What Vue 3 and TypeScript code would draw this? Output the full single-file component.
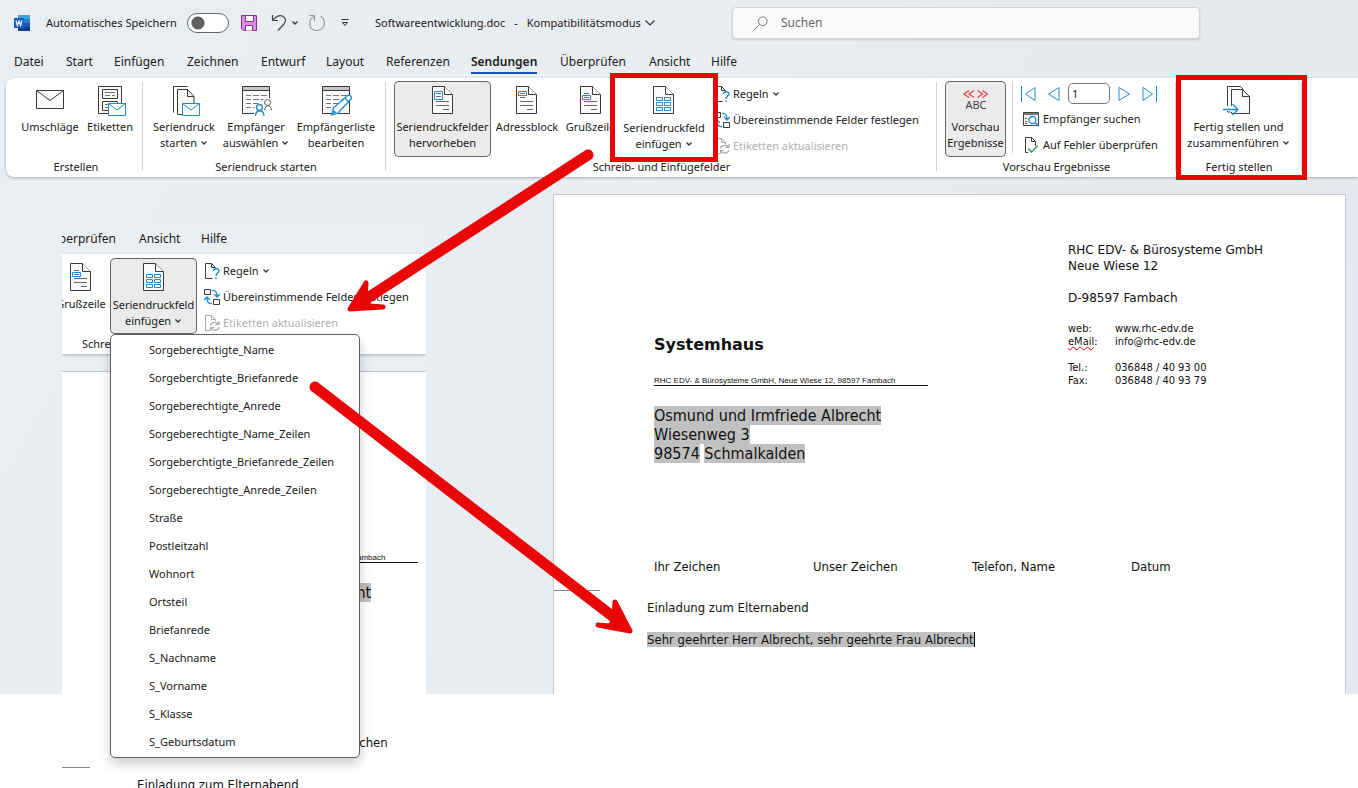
<script setup lang="ts">
import { ref } from 'vue'

interface Tab {
  name: string
  active?: boolean
}

const tabs: Tab[] = [
  { name: 'Datei' },
  { name: 'Start' },
  { name: 'Einfügen' },
  { name: 'Zeichnen' },
  { name: 'Entwurf' },
  { name: 'Layout' },
  { name: 'Referenzen' },
  { name: 'Sendungen', active: true },
  { name: 'Überprüfen' },
  { name: 'Ansicht' },
  { name: 'Hilfe' },
]

const mergeFields: string[] = [
  'Sorgeberechtigte_Name',
  'Sorgeberchtigte_Briefanrede',
  'Sorgeberechtigte_Anrede',
  'Sorgeberechtigte_Name_Zeilen',
  'Sorgeberchtigte_Briefanrede_Zeilen',
  'Sorgeberechtigte_Anrede_Zeilen',
  'Straße',
  'Postleitzahl',
  'Wohnort',
  'Ortsteil',
  'Briefanrede',
  'S_Nachname',
  'S_Vorname',
  'S_Klasse',
  'S_Geburtsdatum',
]

const autoSave = ref(false)
const search = ref('')
const record = ref('1')
</script>

<template>
  <div class="screen">
    <svg class="defs" aria-hidden="true">
      <symbol id="chev" viewBox="0 0 8 8"><path d="M1.500 2.500 4 5l2.500-2.500" fill="none" stroke="#333" stroke-width="1.300" /></symbol>
      <symbol id="mail" viewBox="0 0 32 32">
        <path d="M2.500 6.500h27v18h-27z" fill="#fafafa" stroke="#3a3a3a" />
        <path d="M2.500 6.500 16 16.500 29.500 6.500" fill="none" stroke="#3a3a3a" />
      </symbol>
      <symbol id="labels" viewBox="0 0 32 32">
        <path d="M4.500 2.500h23v27h-23z" fill="#fafafa" stroke="#3a3a3a" />
        <path d="M8.500 5.500h15v9h-15zM8.500 17.500h15v9h-15z" fill="none" stroke="#3a3a3a" />
        <path d="M11 8.500h10M11 11.500h5M18 11.500h3M11 20.500h3M11 23.500h3" stroke="#777" />
        <path d="M14.500 19.500h17v12h-17z" fill="#fff" stroke="#1e8bcd" />
        <path d="m14.500 19.500 8.500 6.500 8.500-6.500" fill="none" stroke="#1e8bcd" />
      </symbol>
      <symbol id="merge" viewBox="0 0 32 32">
        <path d="M5.500 28.500v-26h14" fill="none" stroke="#3a3a3a" />
        <path d="M9.500 30.500v-25h11l6 6.500v18.500z" fill="#fafafa" stroke="none" />
        <path d="M14 30.500H9.500v-25h10l6.500 7v6.500M19.500 5.500v7H26" fill="none" stroke="#3a3a3a" />
        <path d="M14.500 19.500h17v12h-17z" fill="#fff" stroke="#1e8bcd" />
        <path d="m14.500 19.500 8.500 6.500 8.500-6.500" fill="none" stroke="#1e8bcd" />
      </symbol>
      <symbol id="sheet" viewBox="0 0 32 32">
        <path d="M2.500 2.500h27v27h-27z" fill="#fafafa" stroke="#3a3a3a" />
        <path d="M3 3h26v3H3z" fill="#c8c8c8" />
        <path d="M2.500 6.500h27" stroke="#3a3a3a" />
        <path d="M6 11.500h5m2 0h6m2 0h6M6 15.500h5m2 0h6m2 0h6M6 19.500h5m2 0h6M6 23.500h5m2 0h3" stroke="#777" />
      </symbol>
      <symbol id="people" viewBox="0 0 32 32">
        <use href="#sheet" />
        <path d="M14 32v-8l5-5h3l2-5h8v18z" fill="#fff" />
        <circle cx="27.500" cy="18.500" r="3" fill="#fff" stroke="#555" />
        <path d="M24.500 26c.5-5.500 6.500-5.500 7 0" fill="none" stroke="#555" />
        <circle cx="19.500" cy="23.500" r="3" fill="#fff" stroke="#1e8bcd" stroke-width="1.300" />
        <path d="M15.500 32c.5-7 8-7 8.500 0" fill="none" stroke="#1e8bcd" stroke-width="1.300" />
      </symbol>
      <symbol id="editlist" viewBox="0 0 32 32">
        <use href="#sheet" />
        <path d="m11.500 31 2-7 14-12.500c2-1.500 5 1.500 3.500 3.500L18 29z" fill="#fff" stroke="#1e8bcd" stroke-width="1.300" />
        <path d="m11.500 31 1.500-6 4.500 4.500z" fill="#3f9ad6" />
        <path d="m25 14 3.500 4" stroke="#1e8bcd" stroke-width="1.200" />
      </symbol>
      <symbol id="page" viewBox="0 0 32 32">
        <path d="M5.500 2.500h12l8 8v19h-20z" fill="#fafafa" stroke="#3a3a3a" />
        <path d="M17.500 2.500v8h8" fill="#fff" stroke="#3a3a3a" />
      </symbol>
      <symbol id="highlight" viewBox="0 0 32 32">
        <use href="#page" />
        <path d="M7.500 7.500h8v8h-8z" fill="#fff" stroke="#1e8bcd" />
        <path d="M9 9.500h5M9 12.500h5M9 17.500h13M9 21.500h13M16 25.500h6" stroke="#666" />
      </symbol>
      <symbol id="address" viewBox="0 0 32 32">
        <use href="#page" />
        <path d="M7.500 7.500h8v4h-8z" fill="#fff" stroke="#1e8bcd" />
        <path d="M9 9.500h5M9 13.500h5M9 17.500h13M9 21.500h13M16 25.500h6" stroke="#666" />
      </symbol>
      <symbol id="greeting" viewBox="0 0 32 32">
        <use href="#page" />
        <path d="M7.500 11.500h8v4h-8z" fill="#fff" stroke="#1e8bcd" />
        <path d="M9 9.500h5M9 13.500h5M9 17.500h13M9 21.500h13M16 25.500h6" stroke="#666" />
      </symbol>
      <symbol id="field" viewBox="0 0 32 32">
        <use href="#page" />
        <path
          d="M8.500 13.500h6v3h-6zm8 0h6v3h-6zM8.500 18.500h6v3h-6zm8 0h6v3h-6zM8.500 23.500h6v3h-6zm8 0h6v3h-6z"
          fill="#fff" stroke="#1e8bcd" />
      </symbol>
      <symbol id="finish" viewBox="0 0 32 32">
        <path d="M4.500 22V2.500h13l3 3M4.500 27v1h3" fill="none" stroke="#3a3a3a" />
        <path d="M8.500 5.500h11l7 7v17h-18z" fill="#fafafa" />
        <path d="M8.500 22V5.500h11l7 7v17h-18V28M19.500 5.500v7h7" fill="none" stroke="#3a3a3a" />
        <path d="M0 25.500h14M9.500 20l5.500 5.500L9.500 31" fill="none" stroke="#1e8bcd" stroke-width="1.300" />
      </symbol>
      <symbol id="abc" viewBox="0 0 32 32">
        <path d="m9 6.500-5 3.500 5 3.500m5-7L9 10l5 3.500M17.500 6.500l5 3.500-5 3.500m5-7 5 3.500-5 3.500" fill="none" stroke="#e8484c" stroke-width="1.300" />
      </symbol>
      <symbol id="rules" viewBox="0 0 16 16">
        <path d="M8.500 15.500h-7V.5h6l4 4M7.500.5v4h4" fill="none" stroke="#3a3a3a" />
        <path d="M9.500 8c0-3 5.500-3 5.500 0 0 2-3 2.200-3 5M12 14.300V16" fill="none" stroke="#1e8bcd" stroke-width="1.400" />
      </symbol>
      <symbol id="match" viewBox="0 0 16 16">
        <path d="M.5.500h6v5h-6zM9.500 10.500h6v5h-6z" fill="#fff" stroke="#3a3a3a" />
        <path d="M8 1.500c4-.5 5 2 5 6M10 5l3 3 3-3M8 14.500c-4 .5-5-2-5-6M0 11l3-3 3 3" fill="none" stroke="#1e8bcd" stroke-width="1.300" />
      </symbol>
      <symbol id="update" viewBox="0 0 16 16">
        <path d="M5.500 15.500h-4V.5h6l4 4V6M7.500.5v4h4" fill="none" stroke="#aaa" />
        <path d="M6.500 10.500c1-4 6.500-4 8-1M15 6v3.500h-3.500M15 12c-1 4-6.500 4-8 1M6.500 16v-3.500H10" fill="none" stroke="#aaa" stroke-width="1.200" />
      </symbol>
      <symbol id="find" viewBox="0 0 16 16">
        <path d="M.5 1.500h15v13H.5z" fill="#fafafa" stroke="#444" />
        <path d="M1 2h14v2H1z" fill="#777" />
        <path d="M2 7.500h2M2 10.500h2M2 12.500h2" stroke="#666" />
        <circle cx="9.500" cy="9" r="3.500" fill="#fff" stroke="#1e8bcd" stroke-width="1.300" />
        <path d="m12 11.500 4 4" stroke="#1e8bcd" stroke-width="1.500" />
      </symbol>
      <symbol id="check" viewBox="0 0 16 16">
        <path d="M5 15.500H2.500V.5h6l4 4V9M8.500.5v4h4" fill="none" stroke="#3a3a3a" />
        <path d="m5.500 11.500 3 3.500L15 8.500" fill="none" stroke="#2f9e58" stroke-width="1.400" />
      </symbol>
    </svg>

    <div class="window">
      <header class="titlebar">
        <svg class="word" viewBox="0 0 16 16" role="img" aria-label="Word">
          <path d="M4 0h12v4H4z" fill="#41a5ee" />
          <path d="M4 4h12v4H4z" fill="#2b7cd3" />
          <path d="M4 8h12v4H4z" fill="#185abd" />
          <path d="M4 12h12v4H4z" fill="#103f91" />
          <path d="M0 3h10v10H0z" fill="#1a5dbe" />
          <path d="m2 5.500 1.400 5L5 6l1.600 4.500L8 5.500" fill="none" stroke="#fff" stroke-width="1.200" />
        </svg>
        <label class="autosave">
          <span>Automatisches Speichern</span>
          <input v-model="autoSave" type="checkbox" role="switch" />
        </label>
        <button class="tool save" aria-label="Speichern">
          <svg viewBox="0 0 16 16">
            <path d="M.5.500h15v15h-13l-2-2z" fill="#d98fe0" stroke="#8a2c9e" />
            <path d="M4.500.500h8v6h-8zM4.500 15.500v-5h7v5" fill="#fff" stroke="#8a2c9e" />
          </svg>
        </button>
        <button class="tool undo" aria-label="Rückgängig">
          <svg viewBox="0 0 16 16"><path d="M1.500 0v5.500H7M1.500 5.500C5 1.500 8 0 11 1c4 1.500 4.500 5 2 8L7 15.500" fill="none" stroke="#444" stroke-width="1.200" /></svg>
        </button>
        <button class="tool more" aria-label="Weitere Rückgängig-Optionen"><svg viewBox="0 0 8 8"><use href="#chev" /></svg></button>
        <button class="tool redo" aria-label="Wiederholen">
          <svg viewBox="0 0 16 16"><path d="M0 .5h5.500V6M5.500 1C-1 4-.5 13 5 15c5 2 10.500-2 10.500-7 0-3-1.500-5.500-4-6.800" fill="none" stroke="#999" stroke-width="1.200" /></svg>
        </button>
        <button class="tool custom" aria-label="Symbolleiste anpassen">
          <svg viewBox="0 0 8 8"><path d="M.5.500h7" stroke="#333" /><path d="m1.500 3.500 2.500 3 2.500-3z" fill="none" stroke="#333" /></svg>
        </button>
        <button class="docname">
          <span>Softwareentwicklung.doc</span><span>-</span><span>Kompatibilitätsmodus</span>
          <svg viewBox="0 0 10 8"><path d="M.500 1.500 5 6l4.500-4.500" fill="none" stroke="#333" stroke-width="1.200" /></svg>
        </button>
        <label class="search">
          <svg viewBox="0 0 16 16"><circle cx="10" cy="6" r="5" fill="none" stroke="#666" /><path d="M6.500 9.500 0 16" stroke="#666" /></svg>
          <input v-model="search" type="text" placeholder="Suchen" aria-label="Suchen" />
        </label>
      </header>

      <nav class="tabs">
        <button v-for="t in tabs" :key="t.name" :class="{ active: t.active }"><span>{{ t.name }}</span></button>
      </nav>

      <section class="ribbon">
        <div class="group g-create">
          <div class="items">
            <button class="big w-mail"><svg><use href="#mail" /></svg><span>Umschläge</span></button>
            <button class="big w-label"><svg><use href="#labels" /></svg><span>Etiketten</span></button>
          </div>
          <div class="caption">Erstellen</div>
        </div>
        <div class="group g-start">
          <div class="items">
            <button class="big w-start"><svg><use href="#merge" /></svg><span>Seriendruck<br />starten <svg class="chev"><use href="#chev" /></svg></span></button>
            <button class="big w-people"><svg><use href="#people" /></svg><span>Empfänger<br />auswählen <svg class="chev"><use href="#chev" /></svg></span></button>
            <button class="big w-list"><svg><use href="#editlist" /></svg><span>Empfängerliste<br />bearbeiten</span></button>
          </div>
          <div class="caption">Seriendruck starten</div>
        </div>
        <div class="group g-fields">
          <div class="items">
            <button class="big w-high on"><svg><use href="#highlight" /></svg><span>Seriendruckfelder<br />hervorheben</span></button>
            <button class="big w-addr"><svg><use href="#address" /></svg><span>Adressblock</span></button>
            <button class="big w-greet"><svg><use href="#greeting" /></svg><span>Grußzeile</span></button>
            <div class="rows after-callout">
              <button class="small"><svg><use href="#rules" /></svg>Regeln<svg class="chev"><use href="#chev" /></svg></button>
              <button class="small"><svg><use href="#match" /></svg>Übereinstimmende Felder festlegen</button>
              <button class="small" disabled><svg><use href="#update" /></svg>Etiketten aktualisieren</button>
            </div>
          </div>
          <div class="caption">Schreib- und Einfügefelder</div>
          <div class="callout insert">
            <button class="big"><svg><use href="#field" /></svg><span>Seriendruckfeld<br />einfügen <svg class="chev"><use href="#chev" /></svg></span></button>
          </div>
        </div>
        <div class="group g-preview">
          <div class="items">
            <button class="big w-prev on">
              <svg><use href="#abc" /><text x="16" y="25" text-anchor="middle">ABC</text></svg>
              <span>Vorschau<br />Ergebnisse</span>
            </button>
            <div class="rows checks">
              <div class="recnav">
                <button aria-label="Erster Datensatz"><svg viewBox="0 0 16 16"><path d="M1.500 0v16M15 1.500v13L5.500 8z" /></svg></button>
                <button aria-label="Vorheriger Datensatz"><svg viewBox="0 0 16 16"><path d="M13 1.500v13L2.500 8z" /></svg></button>
                <input v-model="record" type="text" aria-label="Datensatz" />
                <button aria-label="Nächster Datensatz"><svg viewBox="0 0 16 16"><path d="M3 1.500v13L13.500 8z" /></svg></button>
                <button aria-label="Letzter Datensatz"><svg viewBox="0 0 16 16"><path d="M14.500 0v16M1 1.500v13L10.500 8z" /></svg></button>
              </div>
              <button class="small"><svg><use href="#find" /></svg>Empfänger suchen</button>
              <button class="small"><svg><use href="#check" /></svg>Auf Fehler überprüfen</button>
            </div>
          </div>
          <div class="caption">Vorschau Ergebnisse</div>
        </div>
        <div class="group g-finish">
          <div class="items">
            <button class="big w-finish"><svg><use href="#finish" /></svg><span>Fertig stellen und<br />zusammenführen <svg class="chev"><use href="#chev" /></svg></span></button>
          </div>
          <div class="caption">Fertig stellen</div>
          <div class="callout frame"></div>
        </div>
      </section>

      <main class="page">
        <div class="letterhead">
          <div class="left">
            <h1>Systemhaus</h1>
            <p class="sender">RHC EDV- &amp; Bürosysteme GmbH, Neue Wiese 12, 98597 Fambach</p>
            <address>
              <mark>Osmund und Irmfriede Albrecht</mark><br />
              <mark>Wiesenweg 3</mark><br />
              <mark>98574</mark> <mark>Schmalkalden</mark>
            </address>
          </div>
          <div class="contact">
            <p>RHC EDV- &amp; Bürosysteme GmbH<br />Neue Wiese 12</p>
            <p>D-98597 Fambach</p>
            <dl>
              <dt>web:</dt><dd>www.rhc-edv.de</dd>
              <dt><span class="typo">eMail</span>:</dt><dd>info@rhc-edv.de</dd>
            </dl>
            <dl>
              <dt>Tel.:</dt><dd>036848 / 40 93 00</dd>
              <dt>Fax:</dt><dd>036848 / 40 93 79</dd>
            </dl>
          </div>
        </div>
        <div class="refs"><span>Ihr Zeichen</span><span>Unser Zeichen</span><span>Telefon, Name</span><span>Datum</span></div>
        <hr class="fold" />
        <div class="body">
          <p>Einladung zum Elternabend</p>
          <p><mark class="caret">Sehr geehrter Herr Albrecht, sehr geehrte Frau Albrecht</mark></p>
        </div>
      </main>
    </div>

    <aside class="inset">
      <nav class="inset-tabs">
        <button>Überprüfen</button><button>Ansicht</button><button>Hilfe</button>
      </nav>
      <section class="inset-ribbon">
        <div class="items">
          <button class="big w-greet-in"><svg><use href="#greeting" /></svg><span>Grußzeile</span></button>
          <button class="big w-field on"><svg><use href="#field" /></svg><span>Seriendruckfeld<br />einfügen <svg class="chev"><use href="#chev" /></svg></span></button>
          <div class="rows">
            <button class="small"><svg><use href="#rules" /></svg>Regeln<svg class="chev"><use href="#chev" /></svg></button>
            <button class="small"><svg><use href="#match" /></svg>Übereinstimmende Felder festlegen</button>
            <button class="small" disabled><svg><use href="#update" /></svg>Etiketten aktualisieren</button>
          </div>
        </div>
        <div class="caption">Schreib- und Einfügefelder</div>
      </section>
      <section class="inset-page">
        <p class="sender">RHC EDV- &amp; Bürosysteme GmbH, Neue Wiese 12, 98597 Fambach</p>
        <p class="recipient"><mark>Osmund und Irmfriede Albrecht</mark></p>
        <p class="ref">Unser Zeichen</p>
        <hr class="fold" />
        <p class="subject">Einladung zum Elternabend</p>
      </section>
      <ul class="menu">
        <li v-for="f in mergeFields" :key="f"><button>{{ f }}</button></li>
      </ul>
    </aside>

    <svg class="arrows" viewBox="0 0 1358 788" aria-hidden="true">
      <g fill="#e90606" stroke="#e90606" stroke-linecap="round" stroke-linejoin="round">
        <path d="M588 155 366 299" stroke-width="11" />
        <path d="m350 309 16-26-1 17 5 6 13 1z" stroke-width="5" />
        <path d="m315 387 301 232" stroke-width="11" />
        <path d="m630 631-15-29-1 18-4 6-12-1z" stroke-width="5" />
      </g>
    </svg>
  </div>
</template>

<style>
body {
  background: #fff;
}
</style>

<style scoped>
.screen {
  position: relative;
  min-height: 100vh;
  overflow: hidden;
  font: 11px/16px 'Noto Sans', 'Open Sans', sans-serif;
  color: #202020;
}
.screen * {
  box-sizing: border-box;
}
.defs {
  position: absolute;
  width: 0;
  height: 0;
}
button,
input {
  font: inherit;
  color: inherit;
  border: 0;
  padding: 0;
  margin: 0;
  background: none;
}
p,
h1,
dl,
dd,
ul {
  margin: 0;
  padding: 0;
}
button {
  white-space: nowrap;
}
svg {
  flex: none;
}
.window {
  height: 694px;
  overflow: hidden;
  background: linear-gradient(120deg, #e8eef2 0%, #e9edf2 45%, #e5eaee 70%, #e6e9f2 100%);
}

/* title bar */
.titlebar {
  height: 46px;
  display: flex;
  align-items: center;
  padding-left: 14px;
}
.word {
  width: 16px;
  height: 16px;
}
.autosave {
  display: flex;
  align-items: center;
  width: 183px;
  margin-left: 16px;
  justify-content: space-between;
  white-space: nowrap;
}
.autosave input {
  appearance: none;
  width: 42px;
  height: 20px;
  border: 1px solid #666;
  border-radius: 10px;
  background: radial-gradient(circle at 10px 9px, #606060 6px, #fff 7px);
}
.tool {
  display: flex;
}
.tool svg {
  width: 16px;
  height: 16px;
}
.save {
  margin-left: 12px;
}
.undo {
  margin-left: 14px;
}
.more {
  margin-left: 4px;
}
.more svg,
.custom svg {
  width: 8px;
  height: 8px;
}
.redo {
  margin-left: 10px;
}
.custom {
  margin-left: 16px;
}
.docname {
  display: flex;
  align-items: center;
  gap: 9px;
  width: 284px;
  margin-left: 26px;
}
.docname svg {
  width: 10px;
  height: 8px;
  margin-left: -5px;
}
.search {
  display: flex;
  align-items: center;
  width: 468px;
  height: 32px;
  margin-left: 73px;
  padding-left: 21px;
  gap: 13px;
  font-size: 12px;
  background: #fafafa;
  border: 1px solid #d2d5d8;
  border-radius: 4px;
  box-shadow: 0 1px 2px #0002;
}
.search svg {
  width: 14px;
  height: 14px;
}
.search input {
  flex: 1;
  outline: 0;
}
.search input::placeholder {
  color: #666;
  opacity: 1;
}

/* tabs */
.tabs,
.inset-tabs {
  display: grid;
  font-size: 12px;
}
.tabs {
  height: 32px;
  padding-left: 14px;
  grid-template-columns: 52px 48px 73px 74px 65px 60px 85px 89px 89px 62px 60px;
}
.tabs button,
.inset-tabs button {
  text-align: left;
}
.tabs span {
  display: inline-block;
  height: 24px;
  line-height: 18px;
  padding-top: 3px;
}
.tabs .active span {
  font-weight: 600;
  border-bottom: 2px solid #1a52b3;
}

/* ribbon */
.ribbon {
  display: flex;
  margin-left: 6px;
  height: 99px;
  background: #fff;
  border-radius: 8px 0 0 8px;
  box-shadow: 0 1px 3px #0004;
}
.group {
  position: relative;
  display: flex;
  flex-direction: column;
  padding-top: 3px;
}
.group::after {
  content: '';
  position: absolute;
  right: 0;
  top: 4px;
  bottom: 6px;
  width: 1px;
  background: #d2d2d2;
}
.items {
  display: flex;
  height: 78px;
}
.caption {
  text-align: center;
  line-height: 16px;
}
.g-create {
  width: 137px;
  padding-left: 3px;
}
.g-start {
  width: 243px;
  padding-left: 3px;
}
.g-fields {
  width: 551px;
}
.g-fields .items {
  padding-left: 8px;
}
.g-preview {
  width: 239px;
}
.g-preview .items {
  padding-left: 8px;
}
.g-finish {
  width: 126px;
}
.big {
  flex: none;
  display: flex;
  flex-direction: column;
  align-items: center;
  height: 76px;
  padding-top: 3px;
  border-radius: 5px;
}
.big > svg {
  width: 32px;
  height: 32px;
}
.big > span {
  margin-top: 3px;
  text-align: center;
  line-height: 16px;
}
.big text {
  font-size: 11px;
  fill: #444;
}
.on {
  background: #ebebeb;
  box-shadow: inset 0 0 0 1px #666;
}
.chev {
  width: 8px;
  height: 8px;
}
.w-mail {
  width: 82px;
}
.w-label {
  width: 38px;
}
.w-start {
  width: 76px;
}
.w-people {
  width: 68px;
}
.w-list {
  width: 92px;
}
.w-high {
  width: 97px;
}
.w-addr {
  width: 72px;
}
.w-greet {
  width: 55px;
}
.w-prev {
  width: 61px;
}
.w-finish {
  width: 125px;
}
.rows {
  display: flex;
  flex-direction: column;
}
.after-callout {
  margin-left: 96px;
}
.small {
  flex: none;
  display: flex;
  align-items: center;
  gap: 3px;
  height: 26px;
}
.small > svg {
  width: 16px;
  height: 16px;
}
.small > .chev {
  width: 8px;
  height: 8px;
}
.small:disabled {
  color: #b0b0b0;
}
.checks {
  margin-left: 6px;
  padding-left: 10px;
  border-left: 1px solid #d2d2d2;
  height: 72px;
}
.checks .small {
  gap: 4px;
}
.recnav {
  flex: none;
  display: flex;
  align-items: center;
  height: 25px;
  margin-left: -3px;
}
.recnav svg {
  display: block;
  width: 16px;
  height: 16px;
  fill: none;
  stroke: #1e8bcd;
}
.recnav button + button {
  margin-left: 10px;
}
.recnav input {
  width: 42px;
  height: 21px;
  margin: 0 6px;
  padding-left: 3px;
  border: 1px solid #777;
  border-radius: 5px;
  background: #fff;
}

/* red highlight frames laid over the ribbon */
.callout {
  position: absolute;
  border: 5px solid #ea0505;
  z-index: 2;
}
.insert {
  left: 224px;
  top: -5px;
  width: 108px;
  height: 89px;
  padding-top: 4px;
  background: #fff;
}
.insert .big {
  width: 100%;
  padding-top: 2px;
}
.insert .big > span {
  margin-top: 4px;
}
.frame {
  left: 0;
  top: -3px;
  width: 131px;
  height: 105px;
}

/* document */
.page {
  height: 500px;
  margin: 17px 12px 0 553px;
  background: #fff;
  border: 1px solid #c6c9cc;
  border-bottom: 0;
}
.page,
.inset-page {
  color: #111;
  font-family: 'DejaVu Sans Condensed', 'DejaVu Sans', sans-serif;
  font-size: 13px;
}
.letterhead {
  display: flex;
  height: 364px;
  padding: 47px 0 0 100px;
}
.left {
  width: 414px;
  padding-top: 92px;
}
h1 {
  font: bold 16px/22px 'DejaVu Sans', sans-serif;
}
.sender {
  width: 274px;
  height: 10px;
  border-bottom: 1px solid #111;
  font: 8px/9px 'Liberation Sans', sans-serif;
  white-space: nowrap;
}
.left .sender {
  margin-top: 20px;
}
address {
  margin-top: 20px;
  font-style: normal;
  font-size: 16px;
  line-height: 19px;
}
mark {
  background: #c0c0c0;
  color: inherit;
}
.contact p {
  margin-bottom: 16px;
  font: 12px/16px 'DejaVu Sans', sans-serif;
}
.contact dl {
  display: grid;
  grid-template-columns: 47px auto;
  margin-bottom: 13px;
  font-size: 11px;
  line-height: 13px;
}
.typo {
  text-decoration: underline wavy #e00 1px;
}
.refs {
  display: grid;
  grid-template-columns: repeat(4, 159px);
  padding-left: 100px;
}
.fold {
  width: 46px;
  height: 1px;
  margin: 15px 0 0;
  border: 0;
  background: #888;
}
.body {
  padding: 9px 0 0 93px;
}
.body p {
  margin-bottom: 16px;
}
.caret {
  border-right: 1px solid #000;
}

/* excerpt with the open menu */
.inset {
  position: absolute;
  left: 62px;
  top: 228px;
  width: 364px;
  height: 560px;
  background: #e9eef2;
  overflow: hidden;
}
.inset-tabs {
  grid-template-columns: 89px 62px 60px;
  align-items: start;
  height: 26px;
  margin-left: -12px;
  padding-top: 3px;
}
.inset-ribbon {
  height: 100px;
  padding-top: 4px;
  overflow: hidden;
  background: #fff;
  box-shadow: 0 1px 3px #0004;
}
.w-greet-in {
  width: 56px;
  margin-left: -9px;
}
.w-field {
  width: 87px;
  margin: 0 7px 0 1px;
}
.w-field > span {
  margin-top: 4px;
}
.inset-ribbon .caption {
  padding-left: 20px;
  text-align: left;
}
.inset-page {
  height: 420px;
  margin-top: 17px;
  padding-top: 181px;
  background: #fff;
  border-top: 1px solid #c6c9cc;
}
.inset-page .sender {
  margin-left: 82px;
}
.recipient {
  margin: 20px 0 0 82px;
  font-size: 16px;
  line-height: 19px;
}
.ref {
  margin: 133px 0 0 241px;
}
.inset-page .fold {
  width: 28px;
  margin-top: 16px;
}
.subject {
  margin: 9px 0 0 75px;
}
.menu {
  position: absolute;
  left: 48px;
  top: 106px;
  width: 250px;
  padding: 1px 0;
  list-style: none;
  background: #fff;
  border: 1px solid #606060;
  border-radius: 5px;
  box-shadow: 0 6px 12px #0003;
}
.menu li,
.menu button {
  height: 28px;
}
.menu button {
  width: 100%;
  padding-left: 38px;
  text-align: left;
}

/* arrows drawn over everything */
.arrows {
  position: absolute;
  left: 0;
  top: 0;
  width: 1358px;
  height: 788px;
  pointer-events: none;
  z-index: 3;
}
</style>
